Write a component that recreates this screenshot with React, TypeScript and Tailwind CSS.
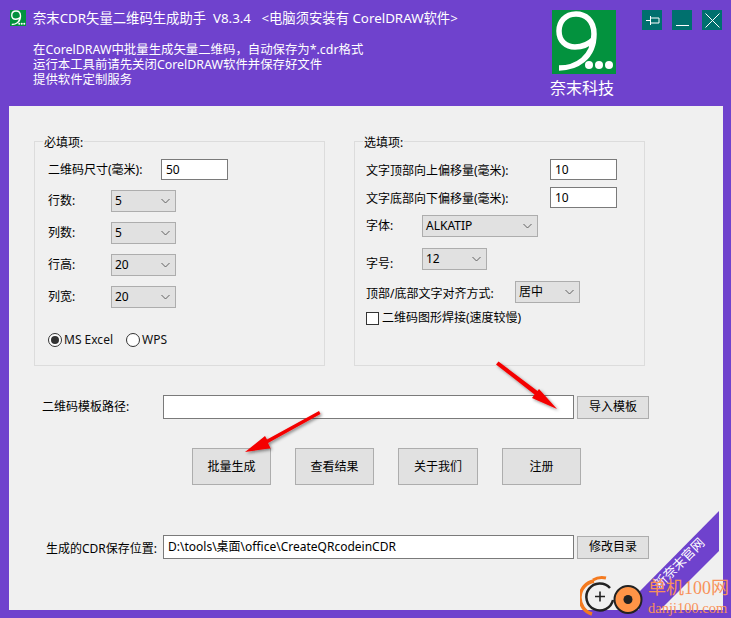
const font = { fontFamily: '"Noto Sans", "Noto Sans CJK SC", sans-serif' };

function Select({ value, w = "w-[65px]" }: { value: string; w?: string }) {
  return (
    <div className={`${w} h-[22px] shrink-0 bg-[#e1e1e1] border border-[#adadad] flex items-center justify-between pl-[3px] pr-[5px] text-[12px] text-black`}>
      <span>{value}</span>
      <svg width="9" height="6" viewBox="0 0 9 6" fill="none" stroke="#606060" strokeWidth="1">
        <path d="M0.5 1 L4.5 5 L8.5 1" />
      </svg>
    </div>
  );
}

function TextBox({ value, w, h = "h-[21px]", pl = "pl-[4px]", extra = "" }: { value: string; w: string; h?: string; pl?: string; extra?: string }) {
  return (
    <input
      readOnly
      value={value}
      className={`${w} ${h} ${pl} ${extra} shrink-0 bg-white border border-[#7a7a7a] text-[12px] text-black outline-none`}
    />
  );
}

function Btn({ label, w, h }: { label: string; w: string; h: string }) {
  return (
    <button className={`${w} ${h} shrink-0 bg-[#e1e1e1] border border-[#adadad] text-[12px] text-black flex items-center justify-center`}>
      {label}
    </button>
  );
}

function Row({ label, value }: { label: string; value: string }) {
  return (
    <div className="flex items-center h-[22px]">
      <span className="w-[63px] text-[12px] text-black">{label}</span>
      <Select value={value} />
    </div>
  );
}

function Radio({ checked, label }: { checked?: boolean; label: string }) {
  return (
    <div className="flex items-center gap-[2px] text-[12px] text-[#111]">
      <span className="w-[14px] h-[14px] rounded-full border border-[#333] bg-white flex items-center justify-center">
        {checked && <span className="w-[8px] h-[8px] rounded-full bg-[#333]" />}
      </span>
      {label}
    </div>
  );
}

function Logo({ size }: { size: number }) {
  return (
    <svg width={size} height={size} viewBox="0 0 64 64" className="shrink-0">
      <rect width="64" height="64" fill="#03923e" />
      <path
        d="M7 58 C24 58 42 48 42 24 C42 10 33 4 24 4 C13 4 7 12 7 21 C7 31 14 37 23 37 C31 37 37 34 42 29"
        fill="none"
        stroke="#fff"
        strokeWidth="5.5"
      />
      <circle cx="37" cy="55" r="4" fill="#fff" />
      <circle cx="47" cy="55" r="4" fill="#fff" />
      <circle cx="57" cy="55" r="4" fill="#fff" />
    </svg>
  );
}

function WinBtn({ children }: { children: React.ReactNode }) {
  return (
    <div className="w-[20px] h-[20px] bg-[#00706e] flex items-center justify-center">
      <svg width="20" height="20" viewBox="0 0 20 20" fill="none" stroke="#fff" strokeWidth="1">
        {children}
      </svg>
    </div>
  );
}

export default function App() {
  return (
    <div className="relative w-[731px] h-[618px] overflow-hidden bg-[#6f42cd]" style={font}>
      {/* header */}
      <header className="h-[106px] flex text-white">
        <div className="w-[550px] pl-[10px] pt-[10px] flex items-start gap-[7px] shrink-0">
          <Logo size={16} />
          <div className="flex flex-col">
            <div className="text-[13.33px] leading-[16px] whitespace-pre">奈末CDR矢量二维码生成助手  V8.3.4   &lt;电脑须安装有 CorelDRAW软件&gt;</div>
            <div className="mt-[16px] text-[12.4px] leading-[15px]">
              <p>在CorelDRAW中批量生成矢量二维码，自动保存为*.cdr格式</p>
              <p>运行本工具前请先关闭CorelDRAW软件并保存好文件</p>
              <p>提供软件定制服务</p>
            </div>
          </div>
        </div>
        <div className="w-[66px] pt-[10px] flex flex-col items-end shrink-0">
          <Logo size={64} />
          <span className="mt-[3px] self-start text-[16px] leading-[22px] whitespace-nowrap">奈末科技</span>
        </div>
        <div className="ml-[26px] pt-[10px] flex gap-[10px]">
          <WinBtn>
            <path d="M4 10.5 H8.5 M8.5 6 V15 M8.5 8 H17 V13 H8.5" />
          </WinBtn>
          <WinBtn>
            <path d="M4 15.5 H17" />
          </WinBtn>
          <WinBtn>
            <path d="M3.5 3.5 L17.5 17.5 M17.5 3.5 L3.5 17.5" />
          </WinBtn>
        </div>
      </header>

      {/* panel */}
      <main className="ml-[9px] w-[714px] h-[504px] bg-[#f0f0f0] pt-[35px] text-black">
        <div className="flex pl-[25px] gap-[29px]">
          {/* required */}
          <section className="relative w-[291px] h-[225px] border border-[#dcdcdc] pl-[13px] pt-[17px] shrink-0">
            <span className="absolute left-[8px] -top-[8px] bg-[#f0f0f0] px-[1px] text-[12px] leading-[17px]">必填项:</span>
            <div className="flex items-center">
              <span className="w-[113px] text-[12px]">二维码尺寸(毫米):</span>
              <TextBox value="50" w="w-[67px]" />
            </div>
            <div className="mt-[10px] flex flex-col gap-[10px]">
              <Row label="行数:" value="5" />
              <Row label="列数:" value="5" />
              <Row label="行高:" value="20" />
              <Row label="列宽:" value="20" />
            </div>
            <div className="mt-[23px] flex gap-[13px]">
              <Radio checked label="MS Excel" />
              <Radio label="WPS" />
            </div>
          </section>

          {/* optional */}
          <section className="relative w-[291px] h-[225px] border border-[#dcdcdc] pl-[11px] pt-[17px] shrink-0">
            <span className="absolute left-[8px] -top-[8px] bg-[#f0f0f0] px-[1px] text-[12px] leading-[17px]">选填项:</span>
            <div className="flex items-center text-[12px]">
              <span className="w-[184px] pt-[2px]">文字顶部向上偏移量(毫米):</span>
              <TextBox value="10" w="w-[67px]" />
            </div>
            <div className="mt-[7px] flex items-center text-[12px]">
              <span className="w-[184px] pt-[3px]">文字底部向下偏移量(毫米):</span>
              <TextBox value="10" w="w-[67px]" />
            </div>
            <div className="mt-[7px] flex items-center h-[22px] text-[12px]">
              <span className="w-[56px]">字体:</span>
              <Select value="ALKATIP" w="w-[116px]" />
            </div>
            <div className="mt-[11px] flex items-start h-[22px] text-[12px]">
              <span className="w-[56px] pt-[7px] leading-[18px]">字号:</span>
              <Select value="12" />
            </div>
            <div className="mt-[11px] flex items-center h-[22px] text-[12px]">
              <span className="w-[149px] pt-[3px]">顶部/底部文字对齐方式:</span>
              <Select value="居中" />
            </div>
            <div className="mt-[6px] flex items-center gap-[3px] text-[12px]">
              <span className="w-[13px] h-[13px] border border-[#333] bg-white" />
              二维码图形焊接(速度较慢)
            </div>
          </section>
        </div>

        <div className="mt-[29px] flex items-center pl-[33px] h-[24px]">
          <span className="w-[121px] text-[12px]">二维码模板路径:</span>
          <TextBox value="" w="w-[411px]" h="h-[24px]" />
          <div className="ml-[3px]">
            <Btn label="导入模板" w="w-[72px]" h="h-[23px]" />
          </div>
        </div>

        <div className="mt-[29px] flex pl-[183px] gap-[24px]">
          <Btn label="批量生成" w="w-[79px]" h="h-[37px]" />
          <Btn label="查看结果" w="w-[79px]" h="h-[37px]" />
          <Btn label="关于我们" w="w-[80px]" h="h-[37px]" />
          <Btn label="注册" w="w-[79px]" h="h-[37px]" />
        </div>

        <div className="mt-[50px] flex items-center pl-[37px] h-[24px]">
          <span className="w-[117px] text-[12px] pt-[3px] whitespace-nowrap">生成的CDR保存位置:</span>
          <TextBox value="D:\tools\桌面\office\CreateQRcodeinCDR" w="w-[411px]" h="h-[24px]" extra="pb-[3px]" />
          <div className="ml-[3px]">
            <Btn label="修改目录" w="w-[72px]" h="h-[23px]" />
          </div>
        </div>
      </main>

      {/* annotation arrows */}
      <svg className="absolute left-0 top-0 pointer-events-none" width="731" height="618" viewBox="0 0 731 618">
        <defs>
          <filter id="sh" x="-30%" y="-30%" width="160%" height="160%">
            <feDropShadow dx="1.5" dy="1.5" stdDeviation="1.5" floodColor="#000" floodOpacity="0.45" />
          </filter>
        </defs>
        <g filter="url(#sh)" fill="#f40000">
          <path d="M496 364.5 L498.5 361.5 L537.5 391 L539 389 L557 409 L532 398 L534.5 394.5 Z" />
          <path d="M319 411 L320.5 414 L268 443 L270.6 448.3 L245 452 L265 436 L267 439.5 Z" />
        </g>
      </svg>

      {/* corner ribbon */}
      <svg className="absolute left-0 top-0 pointer-events-none" width="731" height="618" viewBox="0 0 731 618">
        <path d="M719 511 L719 551 L659 611 L639 611 L639 592 Z" fill="#6f42cd" />
      </svg>
      <span className="absolute left-[639px] top-[554px] w-[80px] text-center text-white text-[13px] leading-[18px] -rotate-45 whitespace-nowrap">
        新奈末官网
      </span>

      {/* site watermark */}
      <svg className="absolute left-[580px] top-[574px]" width="70" height="44" viewBox="0 0 70 44">
        <path d="M14 7 A17 17 0 0 0 12 40" fill="none" stroke="#f47a1f" strokeWidth="3.5" />
        <path d="M13 6 A17 17 0 0 1 26 4" fill="none" stroke="#f47a1f" strokeWidth="3" />
        <path d="M30 14 A13.5 13.5 0 1 0 33 26" fill="none" stroke="#222" strokeWidth="2.5" />
        <path d="M15 22.5 H25 M20 17.5 V27.5" stroke="#222" strokeWidth="1.6" />
        <circle cx="48" cy="25.5" r="13.5" fill="#ff9447" stroke="#222" strokeWidth="2" />
        <circle cx="48" cy="25.5" r="4.5" fill="#222" />
      </svg>
      <div
        className="absolute left-[648px] top-[578px] flex flex-col text-[#f8925a] whitespace-nowrap"
        style={{ fontFamily: '"Liberation Serif", "Noto Sans CJK SC", serif' }}
      >
        <span className="text-[18px] leading-[21px]">单机100网</span>
        <span className="text-[14.5px] leading-[18px]">danji100.com</span>
      </div>
    </div>
  );
}
